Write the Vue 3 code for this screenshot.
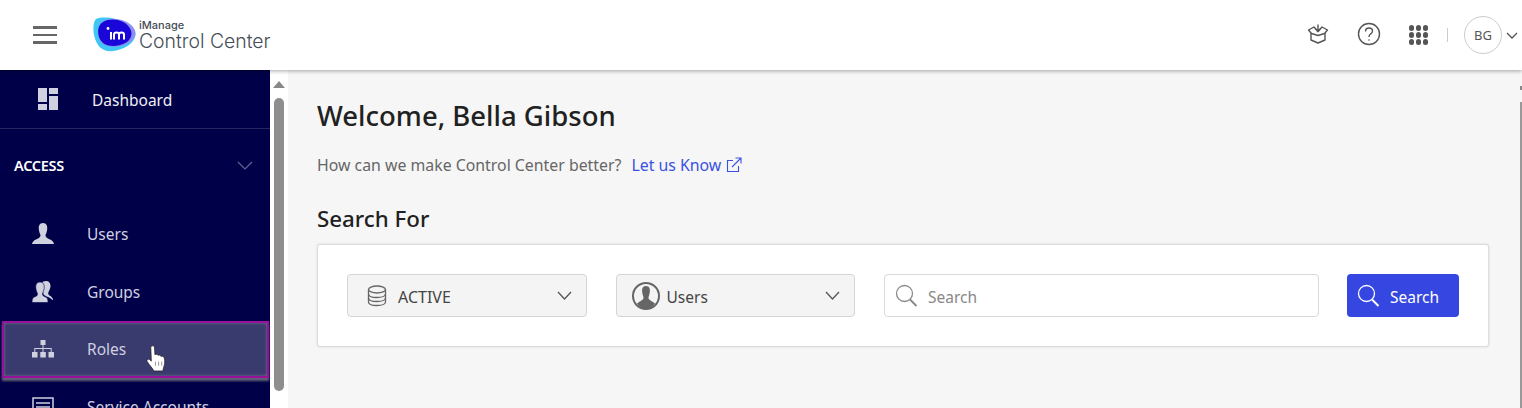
<script setup>
const navItems = [
  { label: 'Users', icon: 'user' },
  { label: 'Groups', icon: 'groups' },
  { label: 'Roles', icon: 'roles', hovered: true },
  { label: 'Service Accounts', icon: 'service' },
];
</script>

<template>
  <div class="page">
    <header class="topbar">
      <div class="burger"><span></span><span></span><span></span></div>
      <div class="brand">
        <svg class="logo" width="46" height="36" viewBox="0 0 46 36">
          <path d="M3 2 C10 -1 24 1 33 6 C40 10 44 14 42 20 C39 30 24 35 14 34 C6 32 3 26 1 18 C0 12 0 5 3 2Z" fill="#41c5f4" />
          <path d="M10 4 C20 0 33 2 40 10 C44 15 43 21 37 25 C28 31 16 31 10 27 C4 22 3 9 10 4Z" fill="#8d8ff0" />
          <path d="M10 5 C19 0 31 3 36 10 C40 15 39 21 34 25 C26 30 15 30 10 26 C4 21 3 9 10 5Z" fill="#1a06d8" />
          <circle cx="15" cy="11.500" r="1.400" fill="#fff" />
          <path d="M18 15 V22.500 M21 22.500 V17.500 Q21 15.500 23.500 15.500 Q26 15.500 26 17.500 V22.500 M26 17.500 Q26 15.500 28.500 15.500 Q31 15.500 31 17.500 V22.500" fill="none" stroke="#fff" stroke-width="2" />
        </svg>
        <div class="brand-text">
          <span class="brand-small">iManage</span>
          <span class="brand-big">Control Center</span>
        </div>
      </div>
      <div class="top-actions">
        <svg class="box-icon" width="22" height="22" viewBox="0 0 22 22" fill="none" stroke="#555" stroke-width="1.400" stroke-linejoin="round">
          <path d="M4 10 V17 L11 20 L18 17 V10" />
          <path d="M1.500 7 L7 4 L11 8.500 L15 4 L20.500 7 L17.500 10.500 L11 12.500 L4.500 10.500Z" />
          <path d="M11 1.500 V8 M8.800 6 L11 8.500 L13.200 6" />
        </svg>
        <svg class="help-icon" width="24" height="24" viewBox="0 0 24 24" fill="none" stroke="#555" stroke-width="1.400">
          <circle cx="12" cy="12" r="10.500" />
          <path d="M8.500 9.500 Q8.500 6 12 6 Q15.500 6 15.500 9 Q15.500 11 13.500 12 Q12 13 12 15" />
          <circle cx="12" cy="18" r="0.800" fill="#555" stroke="none" />
        </svg>
        <div class="apps"><i v-for="n in 9" :key="n"></i></div>
        <div class="divider"></div>
        <div class="avatar">BG</div>
        <svg width="12" height="7" viewBox="0 0 12 7" fill="none" stroke="#555" stroke-width="1.300"><path d="M1 1 L6 6 L11 1" /></svg>
      </div>
    </header>

    <div class="body">
      <aside class="sidebar">
        <div class="dash-row">
          <svg width="20" height="22" viewBox="0 0 20 22" fill="#cfd0e0">
            <rect x="0" y="0" width="9" height="14" />
            <rect x="11" y="0" width="9" height="6" />
            <rect x="11" y="8" width="9" height="14" />
            <rect x="0" y="16" width="9" height="6" />
          </svg>
          <span>Dashboard</span>
        </div>
        <div class="section-row">
          <span>ACCESS</span>
          <svg width="16" height="9" viewBox="0 0 16 9" fill="none" stroke="#62648f" stroke-width="1.200"><path d="M1 1 L8 8 L15 1" /></svg>
        </div>
        <nav class="nav">
          <div v-for="item in navItems" :key="item.label" class="nav-item" :class="{ hovered: item.hovered }">
            <div class="nav-icon">
              <svg v-if="item.icon === 'user'" width="22" height="22" viewBox="0 0 22 22" fill="#cfd0e0">
                <path d="M11 0 C7.500 0 6.500 3 6.800 6 C7 9 8 11 8.500 12 C8.800 14 7 15 4 16.500 C1.500 17.500 0.500 19 0 21 H22 C21.500 19 20.500 17.500 18 16.500 C15 15 13.200 14 13.500 12 C14 11 15 9 15.200 6 C15.500 3 14.500 0 11 0Z" />
              </svg>
              <svg v-else-if="item.icon === 'groups'" width="22" height="22" viewBox="0 0 22 22">
                <path d="M14 0 C10 0 9 3 9.500 6 C10 9 11.500 11 11.500 13 C11.500 15 17 15.500 20.500 19 H21 C21 17 19.500 15.500 17.500 14.500 C16 13.500 16 12.500 16.500 11 C17.500 9 18.500 7 18.500 5 C18.500 2 17 0 14 0Z" fill="#cfd0e0" />
                <path d="M8 1 C4.500 1 3.500 4 3.800 7 C4 10 5.500 11.500 5.500 13.500 C5.500 15 3 15.500 1.500 16.500 C0.500 17.200 0 19 0 21.500 H16 C16 19 15.500 17.200 14.500 16.500 C13 15.500 10.500 15 10.500 13.500 C10.500 11.500 12 10 12.200 7 C12.500 4 11.500 1 8 1Z" fill="#cfd0e0" stroke="#000048" stroke-width="0.600" />
              </svg>
              <svg v-else-if="item.icon === 'roles'" width="22" height="18" viewBox="0 0 22 18" fill="#cfd0e0">
                <rect x="8.500" y="0" width="5" height="5" />
                <rect x="0" y="12" width="5.500" height="5.500" />
                <rect x="8.300" y="12" width="5.500" height="5.500" />
                <rect x="16.500" y="12" width="5.500" height="5.500" />
                <path d="M10.500 5 H11.500 V8 H19.700 V12 H18.700 V9 H11.500 V12 H10.500 V9 H3.300 V12 H2.300 V8 H10.500Z" />
              </svg>
              <svg v-else width="22" height="20" viewBox="0 0 22 20" fill="none" stroke="#cfd0e0" stroke-width="1.500">
                <rect x="1" y="1" width="20" height="18" />
                <path d="M4 6 H18 M4 10 H18 M4 14 H12" />
              </svg>
            </div>
            <span>{{ item.label }}</span>
            <svg v-if="item.hovered" class="cursor" width="20" height="27" viewBox="0 0 19 26">
              <path d="M4.500 2 C5 0.300 7.500 0.300 8 2 L8.500 9.500 C9.500 8.500 11 8.800 11.500 10 C12.500 9.200 14 9.700 14.300 11 C15.300 10.400 17.200 11 17.500 12.500 C18.200 16 18 19 17 21 L16 25 H7.500 C6 22 3 19.500 1 16 C0.200 14.300 1.800 13 3.300 14 L5 15.500 Z" fill="#fff" stroke="#222" stroke-width="0.700" stroke-linejoin="round" />
              <path d="M9 16 V20 M12 16 V20 M15 16 V20" stroke="#777" stroke-width="0.700" />
            </svg>
          </div>
        </nav>
      </aside>

      <div class="side-scroll">
        <div class="arrow-up"></div>
        <div class="thumb"></div>
      </div>

      <main class="main">
        <h1>Welcome, Bella Gibson</h1>
        <p class="feedback">
          How can we make Control Center better?
          <a class="link">Let us Know
            <svg width="16" height="16" viewBox="0 0 16 16" fill="none" stroke="#3a51e4" stroke-width="1.100">
              <path d="M12.500 9 V14.500 H1.500 V3.500 H7" />
              <path d="M6 10 L15 1 M9.500 1 H15 V6.500" />
            </svg>
          </a>
        </p>
        <h2>Search For</h2>
        <section class="card">
          <div class="select">
            <svg class="db" width="20" height="22" viewBox="0 0 20 22" fill="none" stroke="#666" stroke-width="1.300">
              <ellipse cx="10" cy="4.500" rx="8.500" ry="3.500" />
              <path d="M1.500 4.500 V17 C1.500 19 5 20.500 10 20.500 C15 20.500 18.500 19 18.500 17 V4.500" />
              <path d="M1.500 9 C1.500 11 5 12.500 10 12.500 C15 12.500 18.500 11 18.500 9 M1.500 13 C1.500 15 5 16.500 10 16.500 C15 16.500 18.500 15 18.500 13" />
            </svg>
            <span class="select-label">ACTIVE</span>
            <svg class="chev" width="15" height="9" viewBox="0 0 15 9" fill="none" stroke="#555" stroke-width="1.300"><path d="M1 1 L7.500 8 L14 1" /></svg>
          </div>
          <div class="select users">
            <svg width="28" height="30" viewBox="0 0 28 30">
              <circle cx="14" cy="15" r="13" fill="#f4f4f4" stroke="#666" stroke-width="2" />
              <path d="M14 5 C10.500 5 9.800 8 10.200 11 C10.500 14 11.500 15.500 11.500 17 C11.500 19 8 20 5 22.500 C7 26 10.500 28 14 28 C17.500 28 21 26 23 22.500 C20 20 16.500 19 16.500 17 C16.500 15.500 17.500 14 17.800 11 C18.200 8 17.500 5 14 5Z" fill="#666" />
            </svg>
            <span class="select-label">Users</span>
            <svg class="chev" width="15" height="9" viewBox="0 0 15 9" fill="none" stroke="#555" stroke-width="1.300"><path d="M1 1 L7.500 8 L14 1" /></svg>
          </div>
          <div class="search-input">
            <svg width="24" height="24" viewBox="0 0 24 24" fill="none" stroke="#8a8a8a" stroke-width="1.300">
              <circle cx="9.500" cy="9.500" r="8" />
              <path d="M15 15.500 L21.500 22" stroke-width="2" />
            </svg>
            <span class="lowered">Search</span>
          </div>
          <button class="search-btn">
            <svg width="24" height="24" viewBox="0 0 24 24" fill="none" stroke="#fff" stroke-width="1.300">
              <circle cx="9.500" cy="9.500" r="8" />
              <path d="M15 15.500 L21.500 22" stroke-width="2" />
            </svg>
            <span class="lowered">Search</span>
          </button>
        </section>
      </main>
      <div class="edge-tick"></div>
      <div class="edge-bar"></div>
    </div>
  </div>
</template>

<style>
html, body { margin: 0; height: 100%; overflow: hidden; }
</style>

<style scoped>
.page {
  width: 1522px;
  height: 408px;
  overflow: hidden;
  display: flex;
  flex-direction: column;
  font-family: "Noto Sans", "Open Sans", sans-serif;
  background: #f5f5f5;
}
.topbar {
  height: 70px;
  flex: none;
  display: flex;
  align-items: center;
  background: #fff;
  box-shadow: 0 1px 4px rgba(0, 0, 0, 0.35);
  position: relative;
  z-index: 2;
}
.burger {
  display: flex;
  flex-direction: column;
  gap: 5px;
  margin-left: 33px;
}
.burger span {
  display: block;
  width: 24px;
  height: 2.500px;
  background: #666;
}
.brand {
  display: flex;
  align-items: center;
  margin-left: 36px;
}
.brand-text {
  display: flex;
  flex-direction: column;
  margin-left: 0;
  padding-top: 1px;
  color: #454e57;
  font-family: "Inter", sans-serif;
}
.brand-small {
  font-size: 11px;
  line-height: 11px;
  font-weight: 500;
}
.brand-big {
  font-size: 19.400px;
  line-height: 21px;
  font-weight: 300;
}
.top-actions {
  margin-left: auto;
  display: flex;
  align-items: center;
  padding-right: 4px;
}
.box-icon { margin: 0 28px 2px 0; }
.help-icon { margin: 0 28px 2px 0; }
.apps {
  display: grid;
  grid-template-columns: repeat(3, 5.500px);
  gap: 1.500px;
}
.apps i {
  width: 5.500px;
  height: 5.500px;
  border-radius: 50%;
  background: #555;
}
.divider {
  width: 1px;
  height: 14px;
  background: #ccc;
  margin: 0 16px 0 19px;
}
.avatar {
  width: 38px;
  height: 38px;
  box-sizing: border-box;
  border: 1px solid #ccc;
  border-radius: 50%;
  display: flex;
  align-items: center;
  justify-content: center;
  font-size: 13px;
  color: #555;
  margin-right: 4px;
}
.body {
  flex: 1;
  display: flex;
  min-height: 0;
  position: relative;
}
.sidebar {
  width: 270px;
  flex: none;
  background: #000048;
  color: #cfd0e0;
}
.dash-row {
  height: 59px;
  display: flex;
  align-items: center;
  padding-left: 38px;
  border-bottom: 1px solid #26265f;
  color: #f0f0f5;
  font-size: 15.500px;
  box-sizing: border-box;
}
.dash-row span {
  margin-left: 34px;
  padding-top: 2px;
}
.section-row {
  height: 75px;
  display: flex;
  align-items: center;
  justify-content: space-between;
  padding: 0 17px 3px 14px;
  box-sizing: border-box;
  color: #fff;
  font-size: 14.500px;
  font-weight: 600;
  letter-spacing: -0.3px;
}
.nav { padding-top: 1px; }
.nav-item {
  height: 57.800px;
  display: flex;
  align-items: center;
  font-size: 15.500px;
  position: relative;
  box-sizing: border-box;
  margin: 0 1px 0 2px;
}
.nav-item.hovered {
  background: #393a6e;
  border: 2px solid #99109a;
  box-shadow: 0 3px 2px rgba(120, 120, 130, 0.8), inset 0 0 3px rgba(150, 150, 150, 0.7);
  z-index: 1;
}
.nav-icon {
  width: 85px;
  padding-left: 30px;
  box-sizing: border-box;
  display: flex;
  align-items: center;
  flex: none;
}
.nav-item.hovered .nav-icon {
  width: 83px;
  padding-left: 28px;
}
.cursor {
  position: absolute;
  left: 142px;
  top: 22px;
}
.side-scroll {
  width: 18px;
  flex: none;
  background: #fff;
  display: flex;
  flex-direction: column;
  align-items: center;
  padding-top: 11px;
  box-sizing: border-box;
}
.arrow-up {
  width: 0;
  height: 0;
  border-left: 6px solid transparent;
  border-right: 6px solid transparent;
  border-bottom: 7px solid #888;
}
.thumb {
  width: 10px;
  height: 293px;
  margin-top: 10px;
  background: #8e8e8e;
  border-radius: 5px;
}
.main {
  flex: 1;
  padding: 0 33px 0 29px;
  background: #f6f6f6;
  color: #212121;
}
h1 {
  margin: 27px 0 0;
  font-size: 27.500px;
  line-height: 38px;
  font-weight: 500;
}
.feedback {
  margin: 19px 0 0;
  font-size: 15.850px;
  line-height: 22px;
  color: #666;
  display: flex;
  align-items: center;
}
.link {
  margin-left: 10px;
  color: #3a51e4;
  display: inline-flex;
  align-items: center;
  gap: 5px;
}
h2 {
  margin: 28px 0 0;
  font-size: 22.300px;
  line-height: 30px;
  font-weight: 500;
}
.card {
  margin-top: 10px;
  height: 103px;
  box-sizing: border-box;
  background: #fff;
  border: 1px solid #ddd;
  border-radius: 3px;
  box-shadow: 0 0 2px rgba(0, 0, 0, 0.15);
  display: flex;
  align-items: center;
  padding: 0 29px;
}
.select {
  width: 239.500px;
  height: 43px;
  box-sizing: border-box;
  background: #f4f4f4;
  border: 1px solid #d4d4d4;
  border-radius: 4px;
  display: flex;
  align-items: center;
  padding: 0 14px 0 19px;
  margin-right: 29px;
  font-size: 16px;
  color: #444;
}
.select.users {
  padding-left: 15px;
  font-size: 15.500px;
}
.select-label {
  margin-left: 11px;
  padding-top: 2px;
}
.select.users .select-label { margin-left: 7px; }
.lowered { padding-top: 2px; }
.chev { margin-left: auto; }
.search-input {
  width: 434.500px;
  height: 43px;
  box-sizing: border-box;
  border: 1px solid #d9d9d9;
  border-radius: 4px;
  background: #fff;
  display: flex;
  align-items: center;
  padding-left: 10px;
  gap: 9px;
  font-size: 15.500px;
  color: #888;
  margin-right: 28.500px;
}
.search-btn {
  width: 112px;
  height: 43px;
  border: none;
  border-radius: 4px;
  background: #3547e0;
  color: #fff;
  font: inherit;
  font-size: 15.500px;
  display: flex;
  align-items: center;
  padding: 0 0 0 10px;
  gap: 9px;
}
.edge-tick {
  position: absolute;
  right: 0;
  top: 16px;
  width: 2px;
  height: 4px;
  background: #888;
}
.edge-bar {
  position: absolute;
  right: 0;
  top: 32px;
  bottom: 0;
  width: 2px;
  background: #999;
}
</style>
